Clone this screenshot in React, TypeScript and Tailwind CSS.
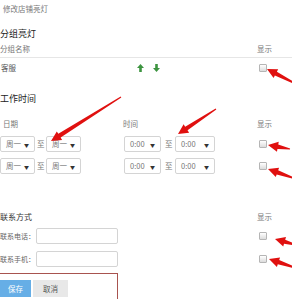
import React from "react";

const font = { fontFamily: '"Noto Sans CJK SC", "Noto Sans", sans-serif' };

function arrowPoints(tx: number, ty: number, hx: number, hy: number) {
  const dx = hx - tx;
  const dy = hy - ty;
  const len = Math.hypot(dx, dy);
  const ux = dx / len;
  const uy = dy / len;
  const nx = -uy;
  const ny = ux;
  const headLen = 10;
  const bx = hx - ux * headLen;
  const by = hy - uy * headLen;
  const pts: [number, number][] = [
    [tx + nx * 0.6, ty + ny * 0.6],
    [bx + nx * 2.2, by + ny * 2.2],
    [bx + nx * 5, by + ny * 5],
    [hx, hy],
    [bx - nx * 5, by - ny * 5],
    [bx - nx * 2.2, by - ny * 2.2],
    [tx - nx * 0.6, ty - ny * 0.6],
  ];
  return pts.map((p) => p.join(",")).join(" ");
}

const arrows: [number, number, number, number][] = [
  [296, 84, 267, 69],
  [121, 97, 51, 141],
  [216, 109, 178, 134],
  [290, 149, 268, 145],
  [296, 179, 268, 169],
  [296, 245, 275, 239],
  [296, 268, 269, 259],
];

function Checkbox() {
  return (
    <span className="block h-[8px] w-[8px] rounded-[1px] border border-[#b5b5b5] bg-gradient-to-b from-white to-[#dcdcdc]" />
  );
}

function Select({ value, w }: { value: string; w: string }) {
  return (
    <div
      className={`flex h-[16px] items-center justify-between rounded-[2px] border border-[#d4d4d4] bg-white pl-[5px] pr-[5px] ${w}`}
    >
      <span className="text-[7.5px] text-[#777]">{value}</span>
      <span className="text-[5px] text-[#333]">▼</span>
    </div>
  );
}

function Arrow({ up }: { up?: boolean }) {
  return (
    <svg width="7" height="8" viewBox="0 0 7 8">
      <polygon
        points={up ? "3.5,0 7,4 4.8,4 4.8,8 2.2,8 2.2,4 0,4" : "3.5,8 7,4 4.8,4 4.8,0 2.2,0 2.2,4 0,4"}
        fill="#3d9440"
      />
    </svg>
  );
}

function Row({ left, right, className }: { left: React.ReactNode; right?: React.ReactNode; className: string }) {
  return (
    <div className={`flex items-center ${className}`}>
      <div className="flex w-[259px] shrink-0 items-center">{left}</div>
      {right}
    </div>
  );
}

export default function App() {
  return (
    <div className="relative h-[299px] w-[292px] overflow-hidden bg-white leading-none text-[#555]" style={font}>
      <div className="flex h-[18px] items-center pl-[3px] text-[7.5px] text-[#777]">修改店铺亮灯</div>

      <div className="mt-[8px] flex h-[15px] items-center text-[9px] text-[#222]">分组亮灯</div>
      <Row
        className="h-[17px] border-b border-[#e6e6e6] text-[7.5px] text-[#777]"
        left={<span>分组名称</span>}
        right={<span className="-ml-[2px]">显示</span>}
      />
      <Row
        className="h-[19px] text-[7.5px] text-[#555]"
        left={
          <>
            <span className="pl-[1px]">客服</span>
            <span className="ml-[121px] flex gap-[9px]">
              <Arrow up />
              <Arrow />
            </span>
          </>
        }
        right={<Checkbox />}
      />

      <div className="mt-[14px] flex h-[14px] items-center text-[9px] text-[#222]">工作时间</div>
      <Row
        className="mt-[11px] h-[15px] text-[7.5px] text-[#777]"
        left={
          <>
            <span className="pl-[3px]">日期</span>
            <span className="ml-[105px]">时间</span>
          </>
        }
        right={<span className="-ml-[2px]">显示</span>}
      />
      {[0, 1].map((i) => (
        <Row
          key={i}
          className={i === 0 ? "mt-[5px] h-[16px]" : "mt-[6px] h-[16px]"}
          left={
            <>
              <Select value="周一" w="w-[35px]" />
              <span className="ml-[2px] w-[7px] text-[7.5px] text-[#777]">至</span>
              <Select value="周一" w="ml-[2px] w-[35px]" />
              <Select value="0:00" w="ml-[43px] w-[37px]" />
              <span className="ml-[4px] w-[7px] text-[7.5px] text-[#777]">至</span>
              <Select value="0:00" w="ml-[3px] w-[40px]" />
            </>
          }
          right={<Checkbox />}
        />
      ))}

      <Row
        className="mt-[35px] h-[15px] text-[8px] text-[#333]"
        left={<span>联系方式</span>}
        right={<span className="-ml-[2px] text-[7.5px] text-[#777]">显示</span>}
      />
      {["联系电话", "联系手机"].map((label, i) => (
        <Row
          key={label}
          className={i === 0 ? "mt-[4px] h-[16px]" : "mt-[7px] h-[16px]"}
          left={
            <>
              <span className="w-[36px] shrink-0 whitespace-nowrap text-[7px] text-[#666]">{label}：</span>
              <div className="h-[16px] w-[82px] rounded-[2px] border border-[#d4d4d4] bg-white" />
            </>
          }
          right={<Checkbox />}
        />
      ))}

      <div className="mt-[6px] h-[40px] w-[118px] border-r border-t border-[#a8534f] pt-[6px]">
        <div className="flex gap-[2px]">
          <button className="flex h-[17px] w-[31px] items-center justify-center bg-[#66aee6] text-[7.5px] text-white">
            保存
          </button>
          <button className="flex h-[17px] w-[35px] items-center justify-center bg-[#e8e8e8] text-[7.5px] text-[#555]">
            取消
          </button>
        </div>
      </div>

      <svg className="pointer-events-none absolute left-0 top-0" width="292" height="299" viewBox="0 0 292 299">
        {arrows.map(([tx, ty, hx, hy], i) => (
          <polygon key={i} points={arrowPoints(tx, ty, hx, hy)} fill="#e0100f" />
        ))}
      </svg>
    </div>
  );
}
